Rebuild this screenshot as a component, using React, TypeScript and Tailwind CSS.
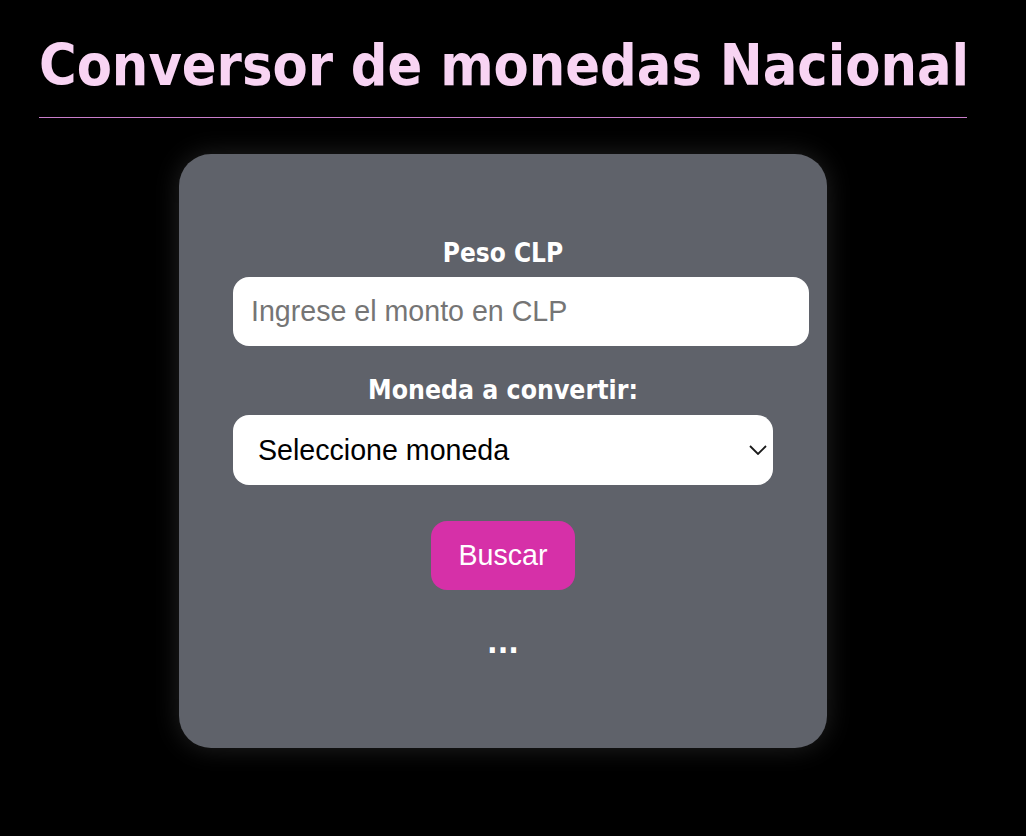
import { useState } from "react";

export default function App() {
  const [monto, setMonto] = useState("");
  const [moneda, setMoneda] = useState("");

  return (
    <main className="min-h-[836px] w-full bg-black pt-[37px] font-['DejaVu_Sans_Condensed','DejaVu_Sans',sans-serif]">
      <header className="ml-[39px] w-[928px]">
        <h1 className="text-[57px] leading-none font-bold text-[#f8d4f3] whitespace-nowrap">
          Conversor de monedas Nacional
        </h1>
        <div className="mt-[23px] h-px bg-[#c97dca]"></div>
      </header>

      <section className="mx-auto mt-[36px] h-[594px] w-[648px] translate-x-[-10px] rounded-[32px] bg-[#5f626a] pt-[86px] shadow-[0_0_26px_rgba(255,255,255,0.13)]">
        <label className="block h-[26px] text-center text-[26px] leading-none font-bold text-white">
          Peso CLP
        </label>
        <input
          type="number"
          value={monto}
          onChange={(e) => setMonto(e.target.value)}
          placeholder="Ingrese el monto en CLP"
          className="mt-[11px] ml-[54px] block h-[69px] w-[576px] rounded-[16px] bg-white pl-[18px] font-['Liberation_Sans',Arial,sans-serif] text-[28.6px] text-black outline-none placeholder:text-[#757575]"
        />

        <label className="mt-[31px] block h-[26px] text-center text-[26.4px] leading-none font-bold text-white">
          Moneda a convertir:
        </label>
        <div className="relative mt-[12px] ml-[54px] h-[70px] w-[540px]">
          <select
            value={moneda}
            onChange={(e) => setMoneda(e.target.value)}
            className="block h-full w-full appearance-none rounded-[16px] bg-white pl-[25px] font-['Liberation_Sans',Arial,sans-serif] text-[28.6px] text-black outline-none"
          >
            <option value="">Seleccione moneda</option>
            <option value="dolar">Dólar</option>
            <option value="euro">Euro</option>
            <option value="uf">UF</option>
          </select>
          <svg
            className="pointer-events-none absolute top-[30px] right-[6px] h-[10px] w-[18px]"
            viewBox="0 0 18 10"
            fill="none"
            stroke="#1a1a1a"
            strokeWidth="1.8"
          >
            <path d="M1 1 L9 9 L17 1" />
          </svg>
        </div>

        <button className="mx-auto mt-[36px] block h-[69px] w-[144px] rounded-[16px] bg-[#d630a8] font-['Liberation_Sans',Arial,sans-serif] text-[28.6px] text-white">
          Buscar
        </button>

        <p className="mt-[37px] h-[30px] text-center text-[31px] leading-none font-bold text-white">...</p>
      </section>
    </main>
  );
}
